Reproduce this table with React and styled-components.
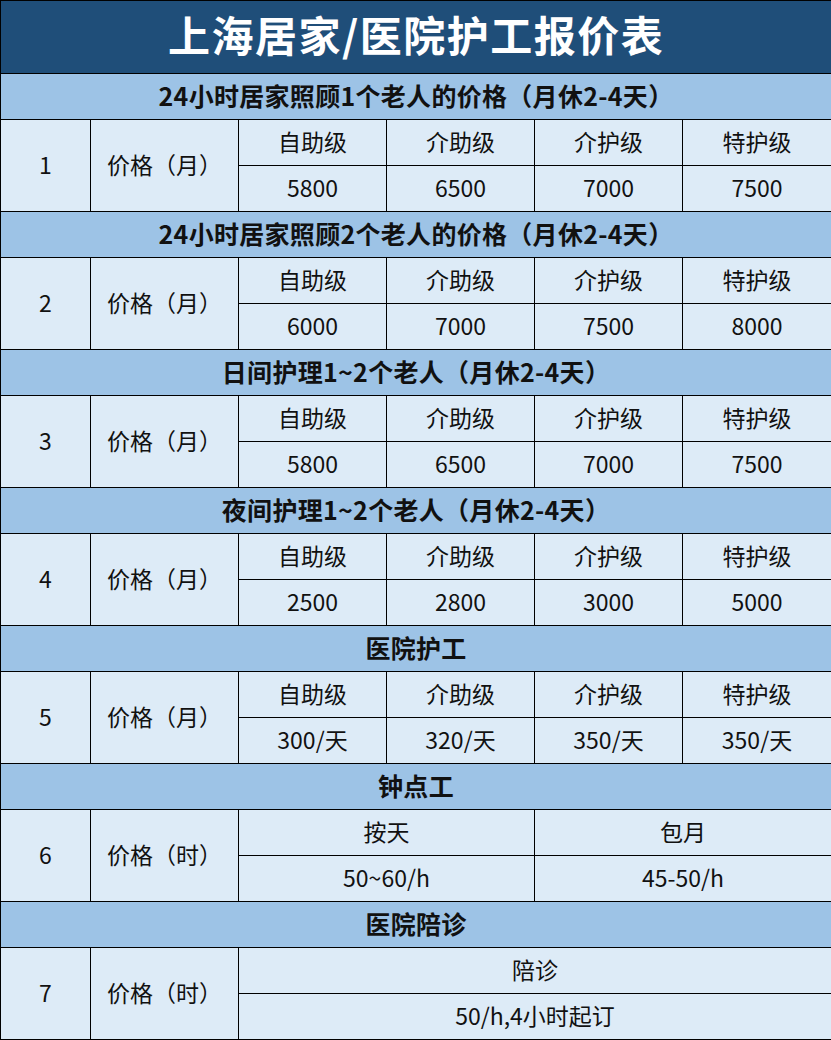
import React from 'react';
import styled, { createGlobalStyle } from 'styled-components';

const GlobalStyle = createGlobalStyle`
  body {
    margin: 0;
    background: #ffffff;
    font-family: "Noto Sans CJK SC", "Noto Sans", sans-serif;
  }
`;

const Table = styled.table`
  width: 831px;
  table-layout: fixed;
  border-collapse: collapse;
  font-family: "Noto Sans CJK SC", "Noto Sans", sans-serif;
  color: #111111;
  td {
    border: 1px solid #000000;
    text-align: center;
    vertical-align: middle;
    padding: 0;
    line-height: 1.2;
  }
`;

const TitleCell = styled.td`
  height: 66px;
  padding-bottom: 6px !important;
  background: #1f4e79;
  color: #ffffff;
  font-size: 42px;
  font-weight: 700;
  letter-spacing: 1.5px;
`;

const SectionCell = styled.td`
  height: 41px;
  padding-bottom: 4px !important;
  background: #9dc3e6;
  font-size: 25px;
  font-weight: 700;
  letter-spacing: 0.3px;
`;

const Cell = styled.td`
  height: 43px;
  padding-bottom: 2px !important;
  background: #ddebf7;
  font-size: 23px;
  font-weight: 400;
`;

const levels = ['自助级', '介助级', '介护级', '特护级'];

const sections = [
  { title: '24小时居家照顾1个老人的价格（月休2-4天）', unit: '月', prices: ['5800', '6500', '7000', '7500'] },
  { title: '24小时居家照顾2个老人的价格（月休2-4天）', unit: '月', prices: ['6000', '7000', '7500', '8000'] },
  { title: '日间护理1~2个老人（月休2-4天）', unit: '月', prices: ['5800', '6500', '7000', '7500'] },
  { title: '夜间护理1~2个老人（月休2-4天）', unit: '月', prices: ['2500', '2800', '3000', '5000'] },
  { title: '医院护工', unit: '月', prices: ['300/天', '320/天', '350/天', '350/天'] },
];

function LevelSection({ index, section }) {
  return (
    <>
      <tr>
        <SectionCell colSpan={6}>{section.title}</SectionCell>
      </tr>
      <tr>
        <Cell rowSpan={2}>{index}</Cell>
        <Cell rowSpan={2}>价格（{section.unit}）</Cell>
        {levels.map((l) => (
          <Cell key={l}>{l}</Cell>
        ))}
      </tr>
      <tr>
        {section.prices.map((p, i) => (
          <Cell key={i}>{p}</Cell>
        ))}
      </tr>
    </>
  );
}

export default function App() {
  return (
    <>
      <GlobalStyle />
      <Table>
        <colgroup>
          <col style={{ width: 90 }} />
          <col style={{ width: 148 }} />
          <col style={{ width: 148 }} />
          <col style={{ width: 148 }} />
          <col style={{ width: 148 }} />
          <col style={{ width: 149 }} />
        </colgroup>
        <tbody>
          <tr>
            <TitleCell colSpan={6}>上海居家/医院护工报价表</TitleCell>
          </tr>
          {sections.map((s, i) => (
            <LevelSection key={i} index={i + 1} section={s} />
          ))}
          <tr>
            <SectionCell colSpan={6}>钟点工</SectionCell>
          </tr>
          <tr>
            <Cell rowSpan={2}>6</Cell>
            <Cell rowSpan={2}>价格（时）</Cell>
            <Cell colSpan={2}>按天</Cell>
            <Cell colSpan={2}>包月</Cell>
          </tr>
          <tr>
            <Cell colSpan={2}>50~60/h</Cell>
            <Cell colSpan={2}>45-50/h</Cell>
          </tr>
          <tr>
            <SectionCell colSpan={6}>医院陪诊</SectionCell>
          </tr>
          <tr>
            <Cell rowSpan={2}>7</Cell>
            <Cell rowSpan={2}>价格（时）</Cell>
            <Cell colSpan={4}>陪诊</Cell>
          </tr>
          <tr>
            <Cell colSpan={4}>50/h,4小时起订</Cell>
          </tr>
        </tbody>
      </Table>
    </>
  );
}
